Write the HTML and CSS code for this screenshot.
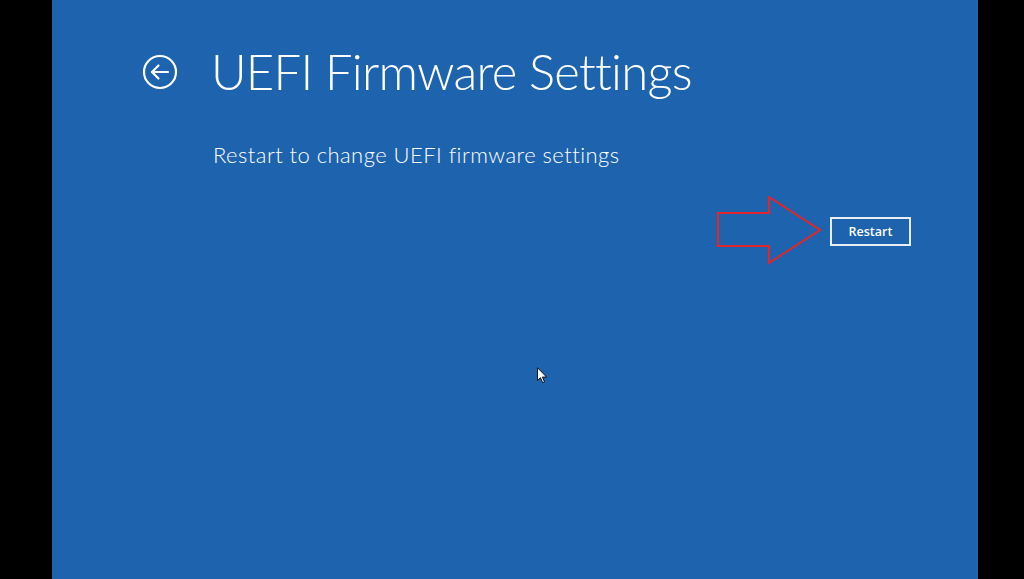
FILE: index.html
```html
<!DOCTYPE html>
<html lang="en">
<head>
<meta charset="utf-8">
<title>UEFI Firmware Settings</title>
<link rel="stylesheet" href="styles.css">
</head>
<body>
<div class="screen">
  <main class="stage">
    <header class="header">
      <button class="back" aria-label="Back">
        <svg width="36" height="36" viewBox="0 0 36 36" fill="none" stroke="#fff" stroke-width="2.2">
          <circle cx="18" cy="18" r="16"/>
          <path d="M10 18 H26" stroke-linecap="round"/>
          <path d="M16.5 11.5 L10 18 L16.5 24.5" stroke-linecap="round" stroke-linejoin="round"/>
        </svg>
      </button>
      <h1 class="title">UEFI Firmware Settings</h1>
    </header>
    <p class="subtitle">Restart to change UEFI firmware settings</p>
    <div class="actions">
      <svg class="pointer-arrow" width="106" height="70" viewBox="0 0 106 70" fill="none">
        <polygon points="1,17 52,17 52,1 103,34 52,67 52,50 1,50" stroke="#e3262b" stroke-width="2" stroke-linejoin="miter"/>
      </svg>
      <button class="restart">Restart</button>
    </div>
    <svg class="cursor" width="11" height="17" viewBox="0 0 12 18">
      <path d="M0.5 0.5 L0.5 14.5 L3.8 11.4 L6.2 16.8 L8.2 15.9 L5.9 10.7 L10.5 10.7 Z" fill="#fff" stroke="#000" stroke-width="1" stroke-linejoin="round"/>
    </svg>
  </main>
</div>
</body>
</html>
```

FILE: styles.css
```css
* { box-sizing: border-box; }
html, body { margin: 0; padding: 0; background: #000; }
body { font-family: "Lato", "Segoe UI", "Liberation Sans", sans-serif; color: #fff; }
.screen { width: 1024px; height: 579px; display: flex; }
.stage {
  position: relative;
  margin-left: 52px;
  width: 926px;
  height: 579px;
  background: #1e63ae;
  padding: 43px 67px 0 90px;
}
.header { display: flex; align-items: center; gap: 33px; }
.back {
  background: none; border: 0; padding: 0; margin: 0;
  width: 36px; height: 36px; display: flex;
  position: relative; top: 1px;
}
.title {
  margin: 0;
  font-family: "Lato", "Segoe UI", sans-serif;
  font-weight: 300;
  font-size: 49px;
  line-height: 56px;
  letter-spacing: -0.75px;
  white-space: nowrap;
}
.subtitle {
  margin: 43px 0 0 71px;
  font-family: "Lato", "Segoe UI", sans-serif;
  font-weight: 300;
  font-size: 22px;
  line-height: 26px;
  letter-spacing: 0.45px;
  white-space: nowrap;
}
.actions {
  display: flex; justify-content: flex-end; align-items: center;
  gap: 7px; margin-top: 28px;
}
.pointer-arrow { display: block; }
.restart {
  width: 81px; height: 29px;
  background: transparent;
  border: 2px solid #e9eef6;
  color: #fff;
  font-family: "Open Sans", "Segoe UI", sans-serif;
  font-weight: 600;
  font-size: 12.5px;
  padding: 0;
}
.cursor { position: absolute; left: 485px; top: 367px; }
```
